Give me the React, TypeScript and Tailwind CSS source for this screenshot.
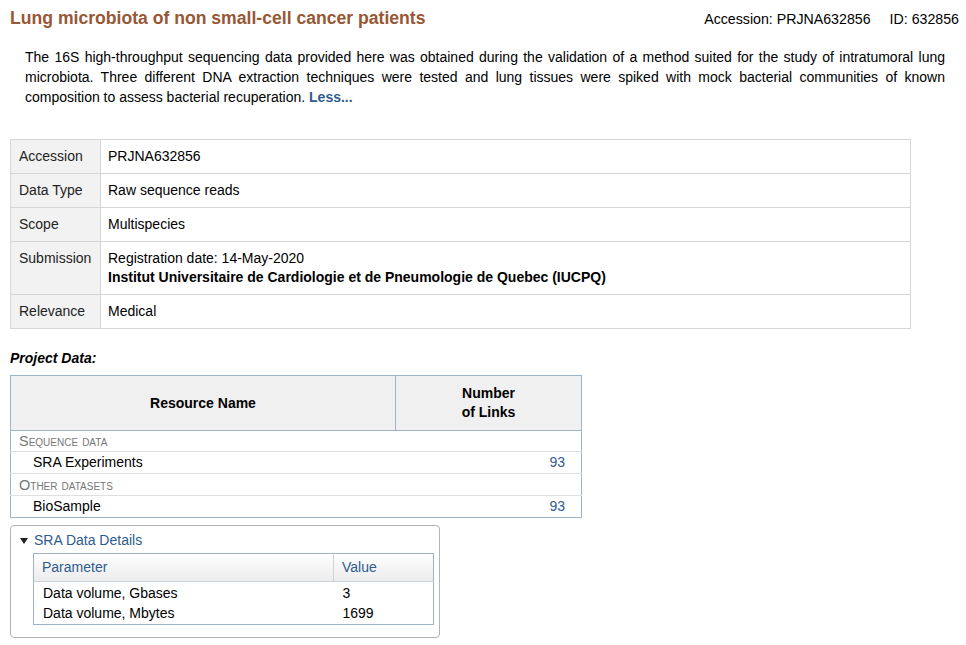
import React from 'react';

interface InfoRow {
  label: string;
  value: React.ReactNode;
}

const infoRows: InfoRow[] = [
  { label: 'Accession', value: 'PRJNA632856' },
  { label: 'Data Type', value: 'Raw sequence reads' },
  { label: 'Scope', value: 'Multispecies' },
  {
    label: 'Submission',
    value: (
      <>
        <div>Registration date: 14-May-2020</div>
        <div className="font-bold">Institut Universitaire de Cardiologie et de Pneumologie de Quebec (IUCPQ)</div>
      </>
    ),
  },
  { label: 'Relevance', value: 'Medical' },
];

export default function App() {
  return (
    <div className="min-h-[645px] bg-white text-black text-[14px] font-['Liberation_Sans',Arial,sans-serif]">
      {/* header */}
      <div className="flex items-baseline justify-between pl-[10px] pr-[7px] pt-[5px]">
        <h1 className="text-[17.6px] font-bold text-[#985735]">Lung microbiota of non small-cell cancer patients</h1>
        <div className="flex gap-[19px] text-[14.2px]">
          <span>Accession: PRJNA632856</span>
          <span>ID: 632856</span>
        </div>
      </div>

      <p className="mt-[16px] ml-[25px] mr-[21px] text-justify leading-[20px]">
        The 16S high-throughput sequencing data provided here was obtained during the validation of a method suited for the study of intratumoral lung microbiota. Three different DNA extraction techniques were tested and lung tissues were spiked with mock bacterial communities of known composition to assess bacterial recuperation.{' '}
        <span className="font-bold text-[#2f5b8f]">Less...</span>
      </p>

      {/* summary table */}
      <table className="mt-[32px] ml-[10px] w-[901px] border-collapse border border-[#d6d6d6]">
        <tbody>
          {infoRows.map((row) => (
            <tr key={row.label} className="border-b border-[#d6d6d6]">
              <td className="w-[90px] bg-[#f2f2f2] border-r border-[#d6d6d6] pl-[8px] py-[7px] align-top leading-[19px] text-[#222]">
                {row.label}
              </td>
              <td className="pl-[7px] py-[7px] align-top leading-[19px]">{row.value}</td>
            </tr>
          ))}
        </tbody>
      </table>

      <div className="mt-[19px] ml-[10px] font-bold italic">Project Data:</div>

      {/* project data table */}
      <table className="mt-[6px] ml-[10px] w-[572px] border-collapse border border-[#9fb3c8]">
        <thead>
          <tr className="bg-[#f0f0f0] h-[55px]">
            <th className="w-[385px] border-r border-b border-[#9fb3c8] font-bold">Resource Name</th>
            <th className="border-b border-[#9fb3c8] font-bold leading-[19px]">
              Number
              <br />
              of Links
            </th>
          </tr>
        </thead>
        <tbody>
          <tr className="border-b border-[#e0e0e0]">
            <td colSpan={2} className="pl-[8px] h-[21px] text-[14.5px] leading-[16px] text-[#777] [font-variant:small-caps]">Sequence data</td>
          </tr>
          <tr className="border-b border-[#e0e0e0]">
            <td className="pl-[22px] h-[22px]">SRA Experiments</td>
            <td className="pr-[16px] text-right text-[#2f5b8f]">93</td>
          </tr>
          <tr className="border-b border-[#e0e0e0]">
            <td colSpan={2} className="pl-[8px] h-[22px] text-[14.5px] leading-[16px] text-[#777] [font-variant:small-caps]">Other datasets</td>
          </tr>
          <tr>
            <td className="pl-[22px] h-[22px]">BioSample</td>
            <td className="pr-[16px] text-right text-[#2f5b8f]">93</td>
          </tr>
        </tbody>
      </table>

      {/* SRA details */}
      <div className="mt-[7px] ml-[10px] w-[430px] rounded-[4px] border border-[#b4b4b4] pl-[9px] pr-[5px] pt-[4px] pb-[12px]">
        <div className="flex items-center gap-[6px] text-[#2f5b8f]">
          <svg width="8" height="6" viewBox="0 0 8 6">
            <path d="M0 0 L8 0 L4 6 Z" fill="#222" />
          </svg>
          <span>SRA Data Details</span>
        </div>
        <table className="mt-[2px] ml-[13px] w-[401px] border-collapse border border-[#9fb3c8]">
          <thead>
            <tr className="h-[28px] bg-gradient-to-b from-white to-[#ebebeb] text-[#2f5b8f]">
              <th className="w-[300px] border-r border-b border-[#c8d2dc] pl-[8px] text-left font-normal">Parameter</th>
              <th className="border-b border-[#c8d2dc] pl-[8px] text-left font-normal">Value</th>
            </tr>
          </thead>
          <tbody>
            <tr>
              <td className="pl-[9px] pt-[1px] h-[21px] leading-[18px]">Data volume, Gbases</td>
              <td className="pl-[9px] pt-[1px] leading-[18px]">3</td>
            </tr>
            <tr>
              <td className="pl-[9px] h-[22px] pb-[2px] leading-[18px]">Data volume, Mbytes</td>
              <td className="pl-[9px] pb-[2px] leading-[18px]">1699</td>
            </tr>
          </tbody>
        </table>
      </div>
    </div>
  );
}
